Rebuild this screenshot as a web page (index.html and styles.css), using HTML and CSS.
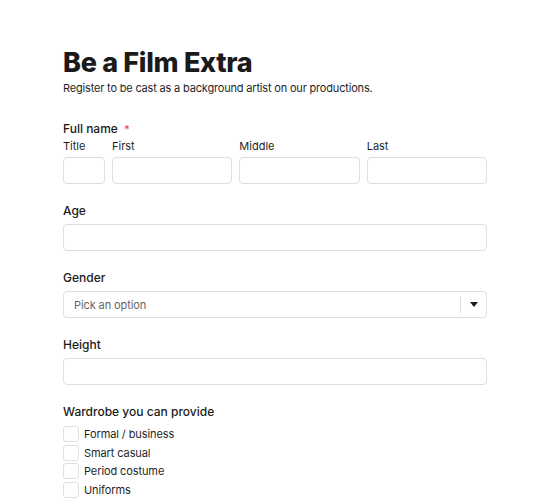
FILE: index.html
```html
<!DOCTYPE html>
<html>
<head>
<meta charset="utf-8">
<link rel="stylesheet" href="styles.css">
</head>
<body>
<main class="form">
  <h1 class="title">Be a Film Extra</h1>
  <p class="subtitle">Register to be cast as a background artist on our productions.</p>

  <section class="field">
    <div class="label">Full name <span class="req">*</span></div>
    <div class="name-grid">
      <div class="sub"><span class="sublabel">Title</span><div class="input"></div></div>
      <div class="sub"><span class="sublabel">First</span><div class="input"></div></div>
      <div class="sub"><span class="sublabel">Middle</span><div class="input"></div></div>
      <div class="sub"><span class="sublabel">Last</span><div class="input"></div></div>
    </div>
  </section>

  <section class="field">
    <div class="label">Age</div>
    <div class="input"></div>
  </section>

  <section class="field">
    <div class="label">Gender</div>
    <div class="input select">
      <span class="placeholder">Pick an option</span>
      <span class="caret-box"><span class="caret"></span></span>
    </div>
  </section>

  <section class="field">
    <div class="label">Height</div>
    <div class="input"></div>
  </section>

  <section class="field">
    <div class="label">Wardrobe you can provide</div>
    <ul class="checks">
      <li><span class="box"></span>Formal / business</li>
      <li><span class="box"></span>Smart casual</li>
      <li><span class="box"></span>Period costume</li>
      <li><span class="box"></span>Uniforms</li>
      <li><span class="box"></span>Other</li>
    </ul>
  </section>
</main>
</body>
</html>
```

FILE: styles.css
```css
html, body {
  margin: 0;
  padding: 0;
  background: #ffffff;
  overflow: hidden;
}
body {
  font-family: Inter, "Noto Sans", sans-serif;
  color: #1a1a1a;
}
.form {
  width: 424px;
  padding: 46px 0 0 63px;
}
.title {
  margin: 0;
  font-size: 27px;
  font-weight: 800;
  letter-spacing: -0.3px;
  line-height: 34px;
  color: #1a1a1a;
}
.subtitle {
  margin: 0;
  font-size: 11px;
  letter-spacing: -0.18px;
  line-height: 16px;
  color: #1f1f1f;
}
.field {
  margin-top: 24px;
}
.field + .field {
  margin-top: 18px;
}
.label {
  font-size: 12px;
  font-weight: 500;
  line-height: 18px;
  color: #1a1a1a;
  margin-bottom: 4px;
}
.req {
  color: #e0457b;
  font-size: 11px;
  margin-left: 3px;
}
.name-grid {
  display: grid;
  grid-template-columns: 42px 1fr 1fr 1fr;
  column-gap: 7px;
  margin-top: -3px;
}
.sub {
  display: flex;
  flex-direction: column;
}
.sublabel {
  font-size: 11px;
  line-height: 14px;
  color: #1f1f1f;
  margin-bottom: 4px;
}
.input {
  box-sizing: border-box;
  height: 27px;
  border: 1px solid #dcdfe4;
  border-radius: 4px;
  background: #fff;
}
.select {
  display: flex;
  align-items: center;
}
.placeholder {
  flex: 1;
  padding-left: 10px;
  font-size: 11px;
  letter-spacing: -0.1px;
  color: #666666;
}
.caret-box {
  display: flex;
  align-items: center;
  justify-content: center;
  width: 25px;
  height: 17px;
  border-left: 1px solid #dcdfe4;
}
.caret {
  width: 0;
  height: 0;
  border-left: 4.5px solid transparent;
  border-right: 4.5px solid transparent;
  border-top: 5px solid #1a1a1a;
  margin-left: 1px;
}
.checks {
  list-style: none;
  margin: 0;
  padding: 0;
}
.checks li {
  display: flex;
  align-items: center;
  height: 18.5px;
  font-size: 11px;
  letter-spacing: -0.1px;
  color: #1f1f1f;
}
.box {
  box-sizing: border-box;
  width: 16px;
  height: 16px;
  border: 1px solid #dcdfe4;
  border-radius: 3px;
  margin-right: 5px;
}
```
